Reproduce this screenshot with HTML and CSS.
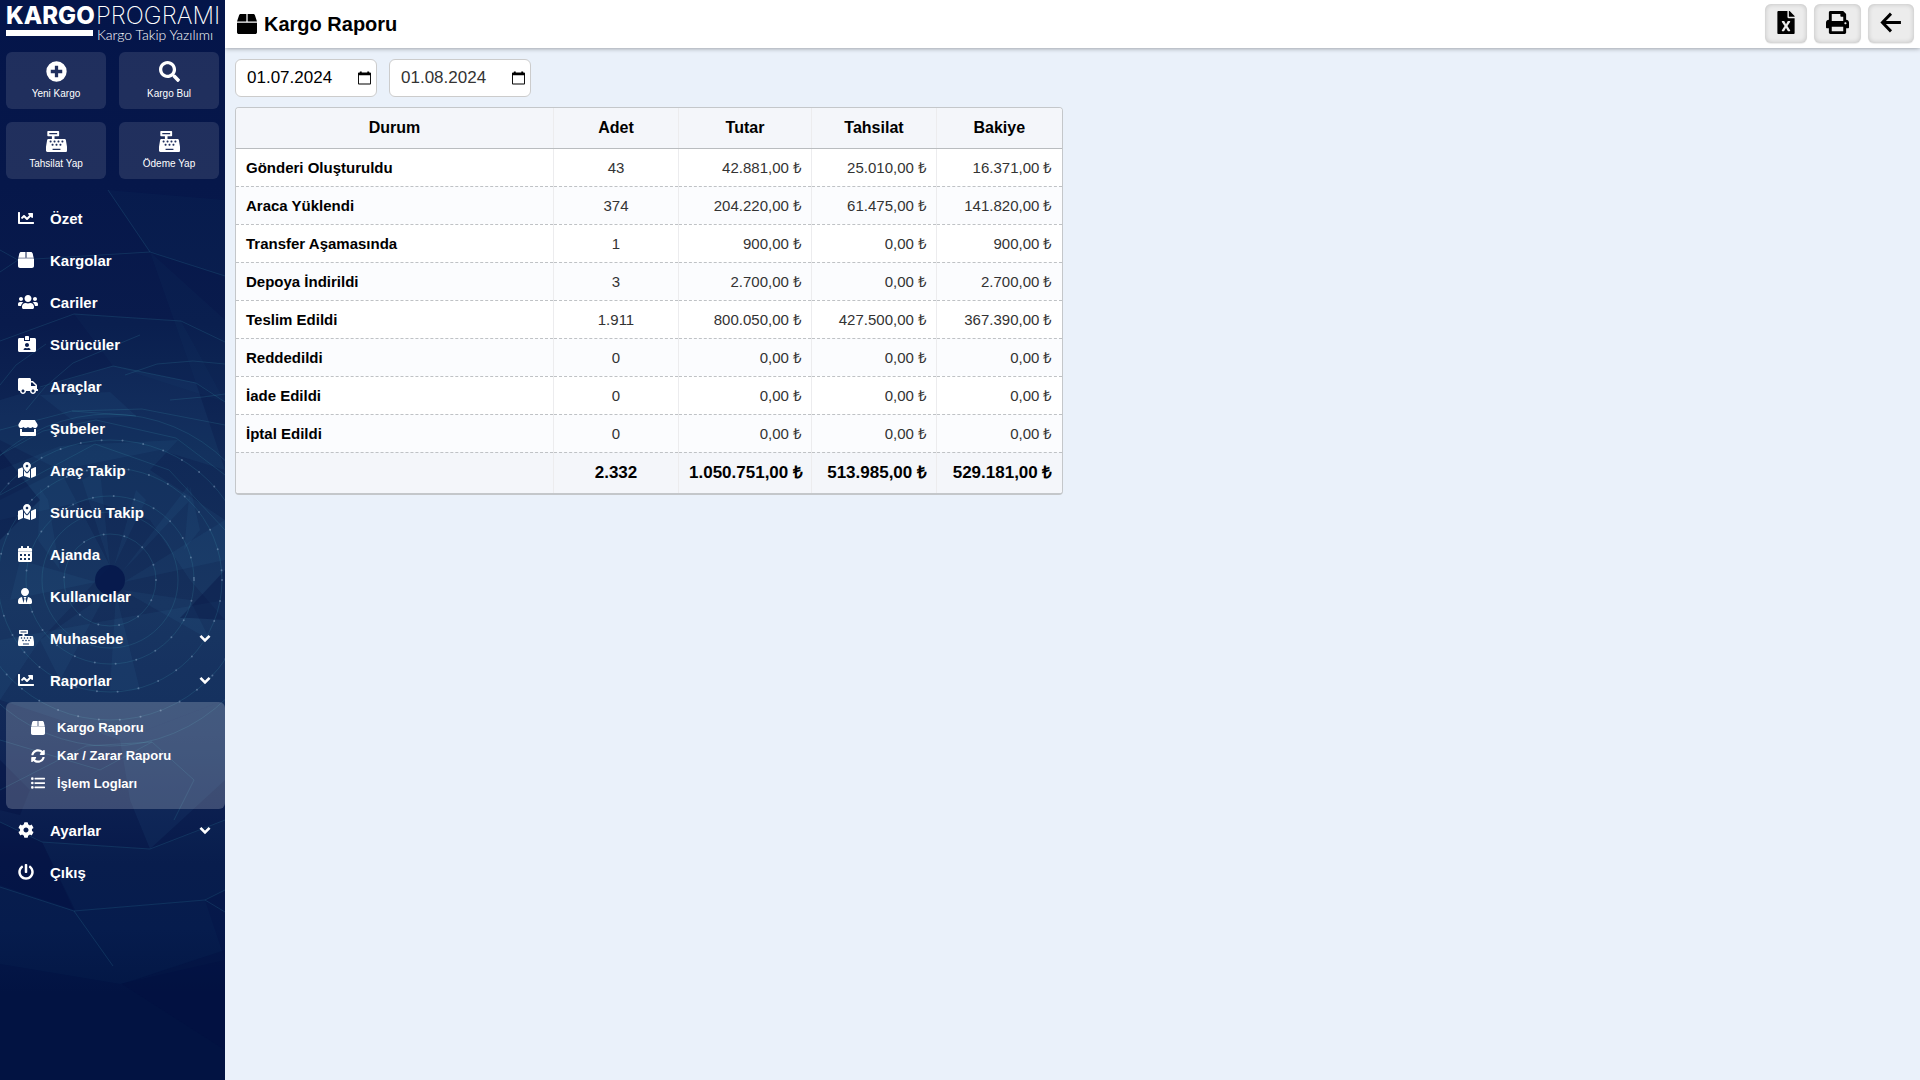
FILE: index.html
```html
<!DOCTYPE html>
<html lang="tr">
<head>
<meta charset="utf-8">
<meta name="viewport" content="width=device-width, initial-scale=1">
<title>Kargo Raporu</title>
<link rel="stylesheet" href="styles.css">
</head>
<body>
<svg class="sprite" aria-hidden="true">
  <symbol id="i-box" viewBox="0 0 512 512"><path d="M509.500 184.600L458.900 32.800C452.400 13.200 434.100 0 413.400 0H272v192h238.700c-.4-2.500-.4-5-1.200-7.400zM240 0H98.600c-20.700 0-39 13.200-45.500 32.800L2.500 184.600c-.8 2.400-.8 4.900-1.200 7.400H240V0zM0 224v240c0 26.500 21.500 48 48 48h416c26.500 0 48-21.500 48-48V224H0z"/></symbol>
  <symbol id="i-parcel" viewBox="0 0 512 512"><path d="M500 180L470 50C462 20 440 0 410 0H272v184h229zM240 0H102C72 0 50 20 42 50L12 180v4h228V0zM0 218v230c0 35 29 64 64 64h384c35 0 64-29 64-64V218H0z"/><path opacity=".75" d="M11 184h490v34H11z"/></symbol>
  <symbol id="i-chart" viewBox="0 0 512 512"><path d="M496 384H64V80c0-8.840-7.160-16-16-16H16C7.160 64 0 71.160 0 80v336c0 17.670 14.330 32 32 32h464c8.840 0 16-7.160 16-16v-32c0-8.840-7.160-16-16-16zM464 96H345.940c-21.380 0-32.090 25.850-16.970 40.970l32.400 32.400L288 242.750l-73.370-73.370c-12.500-12.500-32.760-12.500-45.250 0l-68.690 68.690c-6.250 6.250-6.250 16.380 0 22.630l22.620 22.620c6.250 6.250 16.380 6.250 22.630 0L192 237.250l73.370 73.370c12.500 12.500 32.760 12.500 45.250 0l96-96 32.400 32.400c15.120 15.120 40.970 4.410 40.970-16.970V112c.01-8.840-7.150-16-15.990-16z"/></symbol>
  <symbol id="i-users" viewBox="0 0 640 512"><path d="M96 224c35.300 0 64-28.700 64-64s-28.700-64-64-64-64 28.700-64 64 28.700 64 64 64zm448 0c35.300 0 64-28.700 64-64s-28.700-64-64-64-64 28.700-64 64 28.700 64 64 64zm32 32h-64c-17.600 0-33.500 7.100-45.100 18.600 40.300 22.100 68.900 62 75.100 109.400h66c17.700 0 32-14.300 32-32v-32c0-35.300-28.700-64-64-64zm-256 0c61.900 0 112-50.100 112-112S381.900 32 320 32 208 82.100 208 144s50.100 112 112 112zm76.800 32h-8.300c-20.800 10-43.900 16-68.500 16s-47.600-6-68.500-16h-8.300C179.600 288 128 339.600 128 403.200V432c0 26.500 21.500 48 48 48h288c26.500 0 48-21.500 48-48v-28.800c0-63.600-51.600-115.200-115.200-115.200zm-223.700-13.400C161.500 263.100 145.600 256 128 256H64c-35.300 0-64 28.700-64 64v32c0 17.700 14.300 32 32 32h65.900c6.300-47.400 34.900-87.300 75.200-109.400z"/></symbol>
  <symbol id="i-id" viewBox="0 0 576 512"><path d="M528 64H384v96H192V64H48C21.500 64 0 85.500 0 112v352c0 26.500 21.500 48 48 48h480c26.500 0 48-21.500 48-48V112c0-26.500-21.500-48-48-48zM288 224c35.300 0 64 28.700 64 64s-28.700 64-64 64-64-28.700-64-64 28.700-64 64-64zm93.300 224H194.700c-10.400 0-18.800-10-15.600-19.800 8.300-25.600 32.400-44.200 60.900-44.200h8.200c12.300 5.100 25.700 8 39.800 8s27.600-2.900 39.800-8h8.200c28.400 0 52.500 18.500 60.900 44.200 3.200 9.900-5.200 19.800-15.600 19.800zM352 32c0-17.700-14.300-32-32-32h-64c-17.700 0-32 14.300-32 32v96h128V32z"/></symbol>
  <symbol id="i-truck" viewBox="0 0 640 512"><path d="M624 352h-16V243.900c0-12.700-5.100-24.900-14.100-33.900L494 110.100c-9-9-21.200-14.100-33.900-14.100H416V48c0-26.500-21.500-48-48-48H48C21.500 0 0 21.500 0 48v320c0 26.500 21.500 48 48 48h16c0 53 43 96 96 96s96-43 96-96h128c0 53 43 96 96 96s96-43 96-96h48c8.800 0 16-7.200 16-16v-32c0-8.800-7.200-16-16-16zM160 464c-26.500 0-48-21.500-48-48s21.500-48 48-48 48 21.500 48 48-21.500 48-48 48zm320 0c-26.500 0-48-21.500-48-48s21.500-48 48-48 48 21.500 48 48-21.500 48-48 48zm80-208H416V144h44.100l99.900 99.900V256z"/></symbol>
  <symbol id="i-store" viewBox="0 0 616 512"><path d="M602 118.600L537.100 15C531.300 5.700 521 0 510 0H106C95 0 84.700 5.700 78.900 15L14 118.600c-33.500 53.500-3.800 127.900 58.800 136.400 4.500.6 9.100.9 13.700.9 29.600 0 55.800-13 73.800-33.100 18 20.100 44.300 33.100 73.800 33.100 29.600 0 55.800-13 73.800-33.100 18 20.100 44.300 33.100 73.800 33.100 29.600 0 55.800-13 73.800-33.100 18.100 20.100 44.300 33.100 73.800 33.100 4.700 0 9.200-.3 13.700-.9 62.800-8.400 92.600-82.800 59-136.400zM529.500 288c-10 0-19.900-1.500-29.500-3.800V384H116v-99.800c-9.600 2.200-19.500 3.800-29.500 3.800-6 0-12.100-.4-18-1.200-5.600-.8-11.100-2.100-16.400-3.600V480c0 17.700 14.300 32 32 32h448c17.700 0 32-14.300 32-32V283.200c-5.400 1.600-10.800 2.900-16.400 3.600-6.100.8-12.100 1.200-18.200 1.200z"/></symbol>
  <symbol id="i-map" viewBox="0 0 576 512"><path d="M288 0c-69.590 0-126 56.410-126 126 0 56.260 82.350 158.800 113.900 196.020 6.390 7.540 17.820 7.540 24.200 0C331.650 284.800 414 182.260 414 126 414 56.410 357.590 0 288 0zm0 168c-23.200 0-42-18.800-42-42s18.800-42 42-42 42 18.800 42 42-18.800 42-42 42zM20.120 215.950A32.006 32.006 0 0 0 0 245.660v250.320c0 11.320 11.430 19.060 21.940 14.860L160 448V214.920c-8.840-15.980-16.070-31.540-21.250-46.420L20.120 215.950zM288 359.670c-14.070 0-27.380-6.180-36.510-16.960-19.660-23.200-40.570-49.620-59.490-76.720v182l192 64V266c-18.920 27.090-39.820 53.520-59.490 76.720-9.130 10.770-22.440 16.950-36.510 16.950zm266.060-198.510L416 224v288l139.880-55.950A31.996 31.996 0 0 0 576 426.340V176.020c0-11.320-11.430-19.060-21.940-14.860z"/></symbol>
  <symbol id="i-calendar" viewBox="0 0 448 512"><path fill-rule="evenodd" d="M0 464c0 26.500 21.500 48 48 48h352c26.500 0 48-21.500 48-48V192H0zM64 256h64v64H64zM192 256h64v64h-64zM320 256h64v64h-64zM64 384h64v64H64zM192 384h64v64h-64zM320 384h64v64h-64zM400 64h-48V16c0-8.800-7.200-16-16-16h-32c-8.800 0-16 7.200-16 16v48H160V16c0-8.800-7.200-16-16-16h-32c-8.800 0-16 7.200-16 16v48H48C21.500 64 0 85.500 0 112v48h448v-48c0-26.500-21.500-48-48-48z"/><path opacity=".75" d="M0 160h448v32H0z"/></symbol>
  <symbol id="i-user" viewBox="0 0 448 512"><path d="M224 256c70.700 0 128-57.300 128-128S294.700 0 224 0 96 57.300 96 128s57.300 128 128 128zm95.800 32.600L272 480l-32-136 32-56h-96l32 56-32 136-47.800-191.400C56.900 292 0 350.300 0 422.400V464c0 26.500 21.500 48 48 48h352c26.500 0 48-21.500 48-48v-41.600c0-72.100-56.900-130.400-128.200-133.800z"/></symbol>
  <symbol id="i-register" viewBox="0 0 512 512"><path d="M511.100 378.800l-26.700-160c-2.600-15.400-15.900-26.700-31.600-26.700H208v-64h96c8.800 0 16-7.200 16-16V16c0-8.800-7.200-16-16-16H48c-8.800 0-16 7.200-16 16v96c0 8.800 7.200 16 16 16h96v64H59.100c-15.600 0-29 11.300-31.600 26.700L.8 378.700c-.6 3.500-.9 7-.9 10.500V480c0 17.700 14.300 32 32 32h448c17.700 0 32-14.300 32-32v-90.700c.1-3.500-.2-7-.8-10.500zM280 248c0-8.800 7.200-16 16-16h16c8.800 0 16 7.200 16 16v16c0 8.800-7.200 16-16 16h-16c-8.800 0-16-7.200-16-16v-16zm-32 64h16c8.800 0 16 7.200 16 16v16c0 8.800-7.200 16-16 16h-16c-8.800 0-16-7.200-16-16v-16c0-8.800 7.200-16 16-16zm-32-80c8.800 0 16 7.200 16 16v16c0 8.800-7.200 16-16 16h-16c-8.800 0-16-7.200-16-16v-16c0-8.800 7.200-16 16-16h16zM80 80V48h192v32H80zm40 200h-16c-8.800 0-16-7.200-16-16v-16c0-8.800 7.200-16 16-16h16c8.800 0 16 7.200 16 16v16c0 8.800-7.200 16-16 16zm16 64v-16c0-8.800 7.200-16 16-16h16c8.800 0 16 7.200 16 16v16c0 8.800-7.200 16-16 16h-16c-8.800 0-16-7.200-16-16zm216 112c0 4.400-3.600 8-8 8H168c-4.400 0-8-3.600-8-8v-16c0-4.400 3.600-8 8-8h176c4.400 0 8 3.600 8 8v16zm24-112c0 8.800-7.200 16-16 16h-16c-8.800 0-16-7.200-16-16v-16c0-8.800 7.200-16 16-16h16c8.800 0 16 7.200 16 16v16zm48-80c0 8.800-7.200 16-16 16h-16c-8.800 0-16-7.200-16-16v-16c0-8.800 7.200-16 16-16h16c8.800 0 16 7.200 16 16v16z"/></symbol>
  <symbol id="i-sync" viewBox="0 0 512 512"><path d="M370.720 133.280C339.458 104.008 298.888 87.962 255.848 88c-77.458.068-144.328 53.178-162.791 126.850-1.344 5.363-6.122 9.150-11.651 9.150H24.103c-7.498 0-13.194-6.807-11.807-14.176C33.933 94.924 134.813 8 256 8c66.448 0 126.791 26.136 171.315 68.685L463.030 40.970C478.149 25.851 504 36.559 504 57.941V192c0 13.255-10.745 24-24 24H345.941c-21.382 0-32.090-25.851-16.971-40.971l41.750-41.749zM32 296h134.059c21.382 0 32.090 25.851 16.971 40.971l-41.750 41.750c31.262 29.273 71.835 45.319 114.876 45.280 77.418-.07 144.315-53.144 162.787-126.849 1.344-5.363 6.122-9.150 11.651-9.150h57.304c7.498 0 13.194 6.807 11.807 14.176C478.067 417.076 377.187 504 256 504c-66.448 0-126.791-26.136-171.315-68.685L48.970 471.030C33.851 486.149 8 475.441 8 454.059V320c0-13.255 10.745-24 24-24z"/></symbol>
  <symbol id="i-list" viewBox="0 0 512 512"><circle cx="48" cy="96" r="48"/><circle cx="48" cy="256" r="48"/><circle cx="48" cy="416" r="48"/><rect x="128" y="64" width="384" height="64" rx="16"/><rect x="128" y="224" width="384" height="64" rx="16"/><rect x="128" y="384" width="384" height="64" rx="16"/></symbol>
  <symbol id="i-cog" viewBox="0 0 512 512"><path d="M487.400 315.700l-42.600-24.600c4.300-23.200 4.300-47 0-70.200l42.600-24.600c4.900-2.800 7.100-8.600 5.500-14-11.100-35.600-30-67.800-54.700-94.600-3.800-4.100-10-5.100-14.800-2.300L380.800 110c-17.900-15.400-38.500-27.300-60.800-35.100V25.800c0-5.600-3.900-10.500-9.400-11.700-36.700-8.200-74.300-7.800-109.200 0-5.500 1.200-9.400 6.100-9.400 11.700V75c-22.200 7.900-42.800 19.800-60.800 35.100L88.700 85.500c-4.900-2.800-11-1.900-14.800 2.300-24.700 26.700-43.600 58.900-54.700 94.600-1.700 5.400.6 11.200 5.500 14L67.300 221c-4.300 23.200-4.300 47 0 70.200l-42.600 24.600c-4.900 2.800-7.100 8.600-5.500 14 11.100 35.600 30 67.800 54.700 94.600 3.800 4.100 10 5.100 14.800 2.300l42.600-24.600c17.900 15.400 38.500 27.300 60.800 35.100v49.200c0 5.600 3.900 10.500 9.400 11.700 36.700 8.200 74.300 7.800 109.200 0 5.500-1.200 9.400-6.100 9.400-11.700v-49.200c22.200-7.900 42.800-19.800 60.800-35.100l42.600 24.600c4.900 2.800 11 1.900 14.800-2.300 24.700-26.700 43.600-58.900 54.700-94.600 1.500-5.500-.7-11.300-5.600-14.100zM256 336c-44.100 0-80-35.900-80-80s35.900-80 80-80 80 35.900 80 80-35.900 80-80 80z"/></symbol>
  <symbol id="i-power" viewBox="0 0 512 512"><path d="M400 54.100c63 45 104 118.600 104 201.900 0 136.800-110.800 247.700-247.500 248C120 504.300 8.200 393 8 256.400 7.900 173.100 48.900 99.300 111.800 54.200c11.700-8.300 28-4.800 35 7.700L162.600 90c5.900 10.500 3.100 23.800-6.600 31-41.500 30.800-68 79.600-68 134.900-.1 92.300 74.500 168.100 168 168.100 91.600 0 168.600-74.200 168-169.100-.3-51.800-24.700-101.800-68.100-134-9.700-7.200-12.400-20.500-6.500-30.900l15.800-28.100c7-12.400 23.200-16.100 34.800-7.800zM296 264V24c0-13.300-10.700-24-24-24h-32c-13.300 0-24 10.700-24 24v240c0 13.300 10.700 24 24 24h32c13.300 0 24-10.700 24-24z"/></symbol>
  <symbol id="i-plus" viewBox="0 0 512 512"><path fill-rule="evenodd" d="M256 8a248 248 0 1 0 0 496a248 248 0 1 0 0-496zM216 116h80v100h100v80H296v100h-80V296H116v-80h100z"/></symbol>
  <symbol id="i-search" viewBox="0 0 512 512"><path d="M505 442.700L405.300 343c-4.500-4.500-10.600-7-17-7H372c27.600-35.300 44-79.700 44-128C416 93.100 322.900 0 208 0S0 93.100 0 208s93.100 208 208 208c48.300 0 92.700-16.400 128-44v16.300c0 6.400 2.500 12.500 7 17l99.700 99.700c9.400 9.400 24.600 9.400 33.900 0l28.300-28.300c9.400-9.400 9.400-24.600.1-34zM208 336c-70.700 0-128-57.200-128-128 0-70.700 57.200-128 128-128 70.700 0 128 57.200 128 128 0 70.700-57.200 128-128 128z"/></symbol>
  <symbol id="i-chevron" viewBox="0 0 10 10"><path d="M1.200 3.200L5 7l3.800-3.800" fill="none" stroke="currentColor" stroke-width="2.200"/></symbol>
  <symbol id="i-excel" viewBox="0 0 384 512"><path d="M224 136V0H24C10.700 0 0 10.700 0 24v464c0 13.300 10.700 24 24 24h336c13.300 0 24-10.700 24-24V160H248c-13.200 0-24-10.800-24-24zm60.100 106.500L224 336l60.100 93.500c5.100 8-.6 18.500-10.100 18.500h-34.900c-4.400 0-8.500-2.400-10.600-6.300C208.900 405.500 192 373 192 373c-6.400 14.800-10 20-36.600 68.800-2.100 3.900-6.100 6.300-10.500 6.300H110c-9.500 0-15.200-10.500-10.100-18.500l60.300-93.500-60.300-93.500c-5.200-8 .6-18.500 10.100-18.500h34.800c4.400 0 8.500 2.400 10.600 6.300 26.100 48.800 20 33.600 36.600 68.500 0 0 6.100-11.700 36.600-68.500 2.100-3.900 6.200-6.300 10.600-6.300H274c9.500-.1 15.200 10.400 10.100 18.400zM384 121.900v6.100H256V0h6.100c6.400 0 12.500 2.500 17 7l97.900 98c4.500 4.500 7 10.600 7 16.900z"/></symbol>
  <symbol id="i-print" viewBox="0 0 512 512"><path d="M448 192V77.250c0-8.490-3.370-16.620-9.370-22.630L393.370 9.370c-6-6-14.140-9.370-22.630-9.370H96C78.330 0 64 14.330 64 32v160c-35.350 0-64 28.650-64 64v112c0 8.840 7.160 16 16 16h48v96c0 17.670 14.330 32 32 32h320c17.670 0 32-14.330 32-32v-96h48c8.840 0 16-7.160 16-16V256c0-35.350-28.650-64-64-64zm-64 256H128v-96h256v96zm0-224H128V64h192v48c0 8.840 7.160 16 16 16h48v96zm48 72c-13.250 0-24-10.750-24-24 0-13.260 10.750-24 24-24s24 10.740 24 24c0 13.250-10.750 24-24 24z"/></symbol>
  <symbol id="i-back" viewBox="0 0 20 22"><path d="M10 2.500L1.800 11l8.200 8.500M2 11h17.500" fill="none" stroke="currentColor" stroke-width="2.800"/></symbol>
  <symbol id="i-date" viewBox="0 0 14 14"><path fill-rule="evenodd" d="M2 0h2v1h6V0h2v1h1q1 0 1 1v11q0 1-1 1H1q-1 0-1-1V2q0-1 1-1h1zM1 4h12v9H1z"/></symbol>
</svg>

<div class="app">
  <aside class="sidebar">
    <svg class="sidebar-art" viewBox="0 0 225 1080" preserveAspectRatio="xMidYMin slice" aria-hidden="true">
      <g class="art-facets art-faint">
        <path d="M108 190L150 252L225 276V200z"/>
        <path d="M150 252L225 320V402L196 383z"/>
        <path d="M74 314L181 321L225 402L113 366z"/>
        <path d="M42 842L150 849L225 820V890L205 900L74 911z"/>
        <path d="M0 887L74 911L205 900L225 960L120 984L0 964z"/>
      </g>
      <g class="art-facets">
        <path d="M0 400L113 366L196 383L225 470L160 450L60 470L0 440z"/>
        <path d="M40 395L72 420L136 416L110 392z"/>
        <path d="M0 470L60 446L95 444L178 440L150 470L225 520V620L190 580L150 520L90 500L0 520z"/>
        <path d="M0 500L60 470L110 566L40 640L0 700z"/>
        <path d="M40 488L38 540L60 570L48 500z"/><path d="M190 486L184 550L200 530z"/>
        <path d="M110 566L82 480L100 470z"/><path d="M114 566L136 490L146 500z"/>
        <path d="M122 572L188 486L190 500z"/><path d="M124 582L225 520V560z"/>
        <path d="M122 590L210 640L190 600z"/><path d="M116 594L140 690L110 690z"/>
        <path d="M106 594L60 680L40 640z"/><path d="M96 582L10 600L20 560z"/>
        <path d="M0 640L110 620L225 600V700L120 740L0 700z"/>
        <path d="M120 740L225 700V780L150 849L130 800z"/>
      </g>
      <path class="art-shade" d="M180 618L225 570V620L190 618zM0 450L40 500L0 540zM0 822L42 842L75 910L0 885zM0 760L30 790L20 815L0 810zM122 984L225 950V1050z"/>
      <circle class="art-core" cx="110" cy="580" r="15"/>
      <g class="art-lines">
        <path d="M108 190L150 252L225 276M0 272L18 260L150 252M0 250L18 260M74 314L181 321L225 342M0 341L74 314M40 387L113 366L196 383L225 402M0 385L16 365L46 344M26 410L45 387L73 363L140 335M125 375L157 364L193 361L225 364M170 400L203 397L225 394M72 411L142 409L225 425M0 430L72 411L136 416"/>
        <path d="M0 455L43 431L96 420L176 438L225 475M0 495L95 444L169 470L225 530M0 822L42 842L150 849L225 820M0 887L74 911L205 900L225 890M74 911L113 966M205 900L225 912M0 790L86 746L152 742L194 780L174 820M0 740L100 770L152 742"/>
        <circle cx="110" cy="580" r="46"/><circle cx="110" cy="580" r="68"/><circle cx="110" cy="580" r="84"/><circle cx="110" cy="580" r="112"/><circle cx="110" cy="580" r="140"/><circle cx="110" cy="580" r="166"/>
      </g>
      <g class="art-dots">
        <circle cx="110" cy="580" r="46"/><circle cx="110" cy="580" r="84"/><circle cx="110" cy="580" r="112"/><circle cx="110" cy="580" r="140"/>
        <path d="M150 252h0M74 314h0M181 321h0M113 366h0M196 383h0M136 416h0M42 842h0M150 849h0M74 911h0M205 900h0M194 780h0"/>
      </g>
    </svg>

    <div class="brand">
      <div class="brand-name"><b>KARGO</b><span>PROGRAMI</span></div>
      <div class="brand-sub"><i></i><span>Kargo Takip Yazılımı</span></div>
    </div>

    <div class="quick">
      <button type="button"><svg><use href="#i-plus"/></svg>Yeni Kargo</button>
      <button type="button"><svg><use href="#i-search"/></svg>Kargo Bul</button>
      <button type="button"><svg><use href="#i-register"/></svg>Tahsilat Yap</button>
      <button type="button"><svg><use href="#i-register"/></svg>Ödeme Yap</button>
    </div>

    <nav class="menu">
      <a href="#"><svg class="w16"><use href="#i-chart"/></svg><span>Özet</span></a>
      <a href="#"><svg class="w16"><use href="#i-parcel"/></svg><span>Kargolar</span></a>
      <a href="#"><svg class="w20"><use href="#i-users"/></svg><span>Cariler</span></a>
      <a href="#"><svg class="w18"><use href="#i-id"/></svg><span>Sürücüler</span></a>
      <a href="#"><svg class="w20"><use href="#i-truck"/></svg><span>Araçlar</span></a>
      <a href="#"><svg class="w20"><use href="#i-store"/></svg><span>Şubeler</span></a>
      <a href="#"><svg class="w18"><use href="#i-map"/></svg><span>Araç Takip</span></a>
      <a href="#"><svg class="w18"><use href="#i-map"/></svg><span>Sürücü Takip</span></a>
      <a href="#"><svg class="w14"><use href="#i-calendar"/></svg><span>Ajanda</span></a>
      <a href="#"><svg class="w14"><use href="#i-user"/></svg><span>Kullanıcılar</span></a>
      <a href="#"><svg class="w16"><use href="#i-register"/></svg><span>Muhasebe</span><svg class="chevron"><use href="#i-chevron"/></svg></a>
      <a href="#"><svg class="w16"><use href="#i-chart"/></svg><span>Raporlar</span><svg class="chevron"><use href="#i-chevron"/></svg></a>
      <div class="submenu">
        <a href="#"><svg><use href="#i-parcel"/></svg>Kargo Raporu</a>
        <a href="#"><svg><use href="#i-sync"/></svg>Kar / Zarar Raporu</a>
        <a href="#"><svg><use href="#i-list"/></svg>İşlem Logları</a>
      </div>
      <a href="#"><svg class="w16"><use href="#i-cog"/></svg><span>Ayarlar</span><svg class="chevron"><use href="#i-chevron"/></svg></a>
      <a href="#"><svg class="w16"><use href="#i-power"/></svg><span>Çıkış</span></a>
    </nav>
  </aside>

  <main class="page">
    <header class="topbar">
      <h1><svg><use href="#i-box"/></svg>Kargo Raporu</h1>
      <div class="tools">
        <button type="button" aria-label="Excel"><svg class="tool-excel"><use href="#i-excel"/></svg></button>
        <button type="button" aria-label="Yazdır"><svg class="tool-print"><use href="#i-print"/></svg></button>
        <button type="button" aria-label="Geri"><svg class="tool-back"><use href="#i-back"/></svg></button>
      </div>
    </header>

    <div class="content">
      <form class="filters">
        <label class="date"><input type="text" value="01.07.2024" aria-label="Başlangıç tarihi"><svg><use href="#i-date"/></svg></label>
        <label class="date date-end"><input type="text" value="01.08.2024" aria-label="Bitiş tarihi"><svg><use href="#i-date"/></svg></label>
      </form>

      <div class="columns">
        <div class="card">
          <table class="report">
            <colgroup><col><col class="c-count"><col class="c-total"><col class="c-paid"><col class="c-paid"></colgroup>
            <thead><tr><th>Durum</th><th>Adet</th><th>Tutar</th><th>Tahsilat</th><th>Bakiye</th></tr></thead>
            <tbody>
              <tr><th>Gönderi Oluşturuldu</th><td>43</td><td>42.881,00 ₺</td><td>25.010,00 ₺</td><td>16.371,00 ₺</td></tr>
              <tr><th>Araca Yüklendi</th><td>374</td><td>204.220,00 ₺</td><td>61.475,00 ₺</td><td>141.820,00 ₺</td></tr>
              <tr><th>Transfer Aşamasında</th><td>1</td><td>900,00 ₺</td><td>0,00 ₺</td><td>900,00 ₺</td></tr>
              <tr><th>Depoya İndirildi</th><td>3</td><td>2.700,00 ₺</td><td>0,00 ₺</td><td>2.700,00 ₺</td></tr>
              <tr><th>Teslim Edildi</th><td>1.911</td><td>800.050,00 ₺</td><td>427.500,00 ₺</td><td>367.390,00 ₺</td></tr>
              <tr><th>Reddedildi</th><td>0</td><td>0,00 ₺</td><td>0,00 ₺</td><td>0,00 ₺</td></tr>
              <tr><th>İade Edildi</th><td>0</td><td>0,00 ₺</td><td>0,00 ₺</td><td>0,00 ₺</td></tr>
              <tr><th>İptal Edildi</th><td>0</td><td>0,00 ₺</td><td>0,00 ₺</td><td>0,00 ₺</td></tr>
            </tbody>
            <tfoot><tr><td></td><td>2.332</td><td>1.050.751,00 ₺</td><td>513.985,00 ₺</td><td>529.181,00 ₺</td></tr></tfoot>
          </table>
        </div>
      </div>
    </div>
  </main>
</div>
</body>
</html>
```

FILE: styles.css
```css
* { box-sizing: border-box; }

body {
  margin: 0;
  background: #eaf1fa;
  color: #000;
  font-family: "Liberation Sans", Arial, sans-serif;
  font-size: 15px;
}

svg { display: block; fill: currentColor; flex: none; }
.sprite { display: none; }
button { font-family: inherit; cursor: pointer; }
a { color: inherit; text-decoration: none; }

.app { display: flex; min-height: 100vh; }

/* Sidebar */
.sidebar {
  position: relative;
  flex: none;
  width: 225px;
  color: #fff;
  overflow: hidden;
  background: linear-gradient(#04154a 0%, #06174a 17%, #091b4c 30%, #102957 42%, #152f5b 56%, #112757 68%, #07194a 80%, #05184a 86%, #021342 92%, #021342 100%);
}
.sidebar > * { position: relative; }
.sidebar .sidebar-art { position: absolute; inset: 0; width: 100%; height: 100%; }
.art-facets { fill: #4aa0c8; fill-opacity: .07; }
.art-facets.art-faint { fill-opacity: .03; }
.art-shade { fill: #020f40; fill-opacity: .35; }
.art-core { fill: #04154a; fill-opacity: .8; }
.art-lines { fill: none; stroke: #3fa9b8; stroke-opacity: .17; }
.art-dots { fill: none; stroke: #b9cbe8; stroke-opacity: .35; stroke-width: 2; stroke-linecap: round; stroke-dasharray: 0 21; }

.brand { padding: 0 6px; height: 52px; font-family: Inter, sans-serif; white-space: nowrap; }
.brand-name { display: flex; gap: 2px; padding-top: 4px; font-size: 24px; line-height: 24px; }
.brand-name b { font-weight: 800; width: 88px; }
.brand-name span { font-weight: 200; }
.brand-sub { display: flex; gap: 4px; font: 300 14px/14px Lato, sans-serif; }
.brand-sub i { flex: none; width: 87px; height: 6px; margin-top: 2px; background: #fff; }

.quick { display: grid; grid-template-columns: 1fr 1fr; gap: 13px; padding: 0 6px; }
.quick button {
  display: flex;
  flex-direction: column;
  align-items: center;
  gap: 5px;
  height: 57px;
  padding: 9px 0 0;
  border: 0;
  border-radius: 6px;
  background: rgba(255, 255, 255, .11);
  color: #fff;
  font-size: 10px;
  line-height: 14px;
}
.quick svg { width: 21px; height: 21px; }

.menu { margin-top: 18px; font-weight: bold; }
.menu > a { display: flex; align-items: center; height: 42px; padding: 0 14px 0 18px; }
.menu > a span { flex: 1; margin-left: 12px; }
.menu > a > svg { height: 16px; }
.menu .w14 { width: 14px; margin-right: 6px; }
.menu .w16 { width: 16px; margin-right: 4px; }
.menu .w18 { width: 18px; margin-right: 2px; }
.menu .w20 { width: 20px; }
.menu > a > .chevron { width: 12px; height: 12px; }

.submenu {
  display: flex;
  flex-direction: column;
  gap: 8px;
  height: 107px;
  margin: 1px 0 0 6px;
  padding: 16px 25px;
  border-radius: 6px;
  background: rgba(255, 255, 255, .2);
  font-size: 13px;
}
.submenu a { display: flex; align-items: center; gap: 12px; height: 20px; }
.submenu svg { width: 14px; height: 14px; }

/* Page */
.page { flex: 1; min-width: 0; }
.topbar {
  display: flex;
  align-items: center;
  justify-content: space-between;
  height: 48px;
  padding: 0 6px 0 12px;
  background: #fff;
  box-shadow: 0 0 5px rgba(0, 0, 0, .45);
}
.topbar h1 { display: flex; align-items: center; gap: 7px; margin: 0; font-size: 20px; line-height: 24px; }
.topbar h1 svg { width: 20px; height: 20px; }
.tools { display: flex; align-self: flex-start; gap: 7px; padding-top: 4px; }
.tools button {
  height: 39px;
  padding: 0 12px 2px;
  border: 0;
  border-radius: 6px;
  background: #ececec;
  box-shadow: inset 0 0 5px rgba(0, 0, 0, .2), 0 1px 1px rgba(0, 0, 0, .08);
  color: #000;
}
.tool-excel { width: 18px; height: 23px; }
.tool-print { width: 23px; height: 23px; }
.tool-back { width: 22px; height: 23px; }

.content { padding: 11px 10px; }
.filters { display: flex; gap: 12px; margin-bottom: 10px; }
.date {
  display: flex;
  align-items: center;
  width: 142px;
  height: 38px;
  padding: 0 5px 0 11px;
  border: 1px solid #ccc;
  border-radius: 6px;
  background: #fff;
}
.date input { flex: 1; min-width: 0; padding: 0; border: 0; outline: 0; background: none; font: 17px "Liberation Sans", Arial, sans-serif; color: #000; }
.date-end input { color: #333; }
.date svg { width: 13px; height: 14px; }

.columns { display: grid; grid-template-columns: 1fr 1fr; gap: 20px; }
.card { border: 1px solid #c4c7ca; border-bottom-width: 2px; border-radius: 4px; overflow: hidden; background: #fff; }

.report { width: 100%; table-layout: fixed; border-collapse: collapse; white-space: nowrap; }
.report .c-count { width: 125px; }
.report .c-total { width: 133px; }
.report .c-paid { width: 125px; }
.report th, .report td { height: 38px; padding: 0 10px; border-left: 1px solid #ececee; text-align: right; line-height: 18px; }
.report th:first-child, .report td:first-child { border-left: 0; }
.report thead th { height: 40px; border-bottom: 1px solid #b9bcbf; background: #f4f6fa; font-size: 16px; text-align: center; }
.report tbody th { text-align: left; }
.report tbody td { color: #333; }
.report tbody th, .report tbody td { padding-top: 2px; border-bottom: 1px dashed #bfc2c5; }
.report tbody tr:nth-child(even) { background: #fbfcfe; }
.report td:nth-child(2) { text-align: center; }
.report td:nth-child(n+3) { padding-right: 9px; }
.report tfoot td { height: 41px; background: #f4f6fa; font-size: 17px; font-weight: bold; }
```
